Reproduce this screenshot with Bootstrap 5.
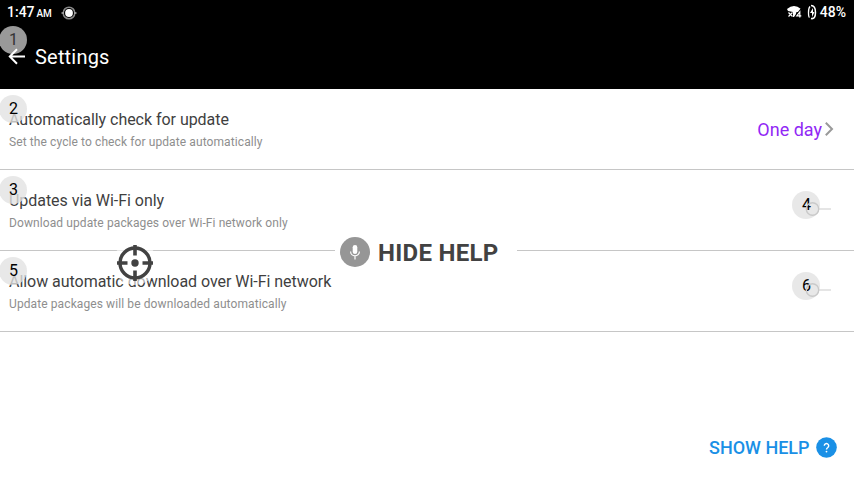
<!DOCTYPE html>
<html lang="en">
<head>
<meta charset="utf-8">
<meta name="viewport" content="width=device-width, initial-scale=1">
<title>Settings</title>
<link href="https://cdn.jsdelivr.net/npm/bootstrap@5.3.0/dist/css/bootstrap.min.css" rel="stylesheet">
<style>
body{font-family:Roboto,sans-serif;width:854px;height:480px;overflow:hidden;background:#fff}
.topbar{height:89px;background:#000;color:#fff}
.status{height:25px;padding:0 8px 0 7px;font-size:14px;font-weight:500;line-height:25px}
.ampm{font-size:10px;margin-left:2px;padding-top:2px;letter-spacing:-.2px}
.sync{margin-left:8px}
.appbar{height:64px;padding-left:8px}
.page-title{font-size:20px;line-height:24px;font-weight:400;letter-spacing:.2px;margin-left:9px}
.setting{height:81px;padding:20px 23px 0 9px;border-bottom:1px solid #c6c6c6}
.label-main{font-size:16px;line-height:22px;color:#3f3f3f;letter-spacing:-.04px}
.label-sub{font-size:12px;line-height:16px;margin-top:3px;color:#8e8e8e;letter-spacing:.1px}
.choice{font-size:18px;line-height:22px;color:#9128f5;padding-top:10px;margin-right:-3px}
.choice svg{margin-left:3px;margin-top:1px}
.num{position:absolute;width:28px;height:28px;border-radius:50%;background:rgba(226,226,226,.78);color:#000;font-size:16px;line-height:28px;text-align:center;left:-1px;top:6px;padding-left:1px}
.num-dark{background:#999;color:#333;top:1px}
.num-end{left:792px;top:21px}
.switch{margin-top:11px}
.overlay{position:absolute}
.aim{left:113px;top:241px}
.hide-help{left:335px;top:233px;width:182px;height:38px;background:#fff;padding-left:5px;color:#424242;font-size:24px;font-weight:700;letter-spacing:.3px}
.hide-help span{padding-top:2px}
.show-help{left:709px;top:436px;color:#1a90e6;font-size:18px;font-weight:500;line-height:24px}
.show-help svg{margin-left:6px;margin-bottom:1px}
</style>
<script src="https://cdn.jsdelivr.net/npm/bootstrap@5.3.0/dist/js/bootstrap.bundle.min.js"></script>
</head>
<body class="position-relative m-0">
<header class="topbar">
  <div class="status d-flex align-items-center">
    <span>1:47</span><span class="ampm">AM</span>
    <svg class="sync" width="18" height="18" viewBox="0 0 18 18"><circle cx="9" cy="9" r="5.800" fill="none" stroke="#888" stroke-width="1.500"/><path d="M1.500 9h2.500M14 9h2.500" stroke="#aaa" stroke-width="1.500"/><circle cx="9" cy="9" r="3.900" fill="#fff"/></svg>
    <svg class="ms-auto" width="33" height="18" viewBox="0 0 33 18"><path d="M0 5Q7-1 14 5L13 8H9.500L8 13H6L6 8 1 7Z" fill="#fff"/><path d="M1.500 8.500l4 4M5.500 8.500l-4 4" stroke="#fff" stroke-width="1.200"/><path d="M12.800 13.500V8l-3 3.800H14.300" stroke="#000" stroke-width="3" fill="none"/><path d="M12.800 13.500V8l-3 3.800H14.300" stroke="#fff" stroke-width="1.200" fill="none"/><path d="M23 2.500q-1.500 1.500-1.500 6t1 5" fill="none" stroke="#fff" stroke-width="1.300"/><path d="M24 1.500q4.500 0 4.500 7t-4.500 6" fill="none" stroke="#fff" stroke-width="1.500"/><path d="M26 4l-3 5h2v4l2.500-5H26z" fill="#fff"/></svg>
    <span>48%</span>
  </div>
  <div class="appbar d-flex align-items-center position-relative">
    <span class="num num-dark">1</span>
    <svg class="position-relative" width="18" height="18" viewBox="0 0 18 18"><path d="M9 1.300L1.800 8.500 9 15.700M2 8.500H17" fill="none" stroke="#fff" stroke-width="2"/></svg>
    <h1 class="page-title mb-0">Settings</h1>
  </div>
</header>
<main>
  <section class="setting d-flex position-relative">
    <div class="flex-grow-1"><div class="label-main">Automatically check for update</div><div class="label-sub">Set the cycle to check for update automatically</div></div>
    <div class="choice d-flex">One day<svg width="9" height="18" viewBox="0 0 9 18"><path d="M.8 2.800L7 9l-6.200 6.200" fill="none" stroke="#999" stroke-width="2"/></svg></div>
    <span class="num">2</span>
  </section>
  <section class="setting d-flex position-relative">
    <div class="flex-grow-1"><div class="label-main">Updates via Wi-Fi only</div><div class="label-sub">Download update packages over Wi-Fi network only</div></div>
    <span class="num">3</span><span class="num num-end">4</span>
    <svg class="switch position-relative" width="28" height="16" viewBox="0 0 28 16"><path d="M16 8H28" stroke="#e5e5e5" stroke-width="2"/><circle cx="9.500" cy="8" r="6.200" fill="none" stroke="#c9c9c9" stroke-width="1.400"/></svg>
  </section>
  <section class="setting d-flex position-relative">
    <div class="flex-grow-1"><div class="label-main">Allow automatic download over Wi-Fi network</div><div class="label-sub">Update packages will be downloaded automatically</div></div>
    <span class="num">5</span><span class="num num-end">6</span>
    <svg class="switch position-relative" width="28" height="16" viewBox="0 0 28 16"><path d="M16 8H28" stroke="#e5e5e5" stroke-width="2"/><circle cx="9.500" cy="8" r="6.200" fill="none" stroke="#c9c9c9" stroke-width="1.400"/></svg>
  </section>
</main>
<svg class="overlay aim" width="44" height="44" viewBox="0 0 44 44"><circle cx="22" cy="22" r="22" fill="#fff" fill-opacity=".6"/><circle cx="22" cy="22" r="15" fill="none" stroke="#424242" stroke-width="3.500"/><circle cx="22" cy="22" r="3.700" fill="#424242"/><path d="M22 4V14.500M22 29.500V40M4 22H14.500M29.500 22H40" stroke="#424242" stroke-width="3.600"/></svg>
<div class="overlay hide-help d-flex align-items-center"><svg class="me-2" width="30" height="30" viewBox="0 0 30 30"><circle cx="15" cy="15" r="15" fill="#969696"/><rect x="12.700" y="8" width="4.600" height="9" rx="2.300" fill="#fff"/><path d="M10.600 14.500a4.400 4.400 0 0 0 8.800 0M15 19v3.500" fill="none" stroke="#fff" stroke-width="1.200"/></svg><span>HIDE HELP</span></div>
<div class="overlay show-help d-flex align-items-center"><span>SHOW HELP</span><svg width="21" height="21" viewBox="0 0 21 21"><circle cx="10.500" cy="10.500" r="10.300" fill="#1a90e6"/><path d="M8.300 8.700a2.200 2.200 0 1 1 3.500 1.800c-.9.600-1.300 1-1.300 2" fill="none" stroke="#fff" stroke-width="1.400"/><circle cx="10.500" cy="14.600" r=".9" fill="#fff"/></svg></div>
</body>
</html>
